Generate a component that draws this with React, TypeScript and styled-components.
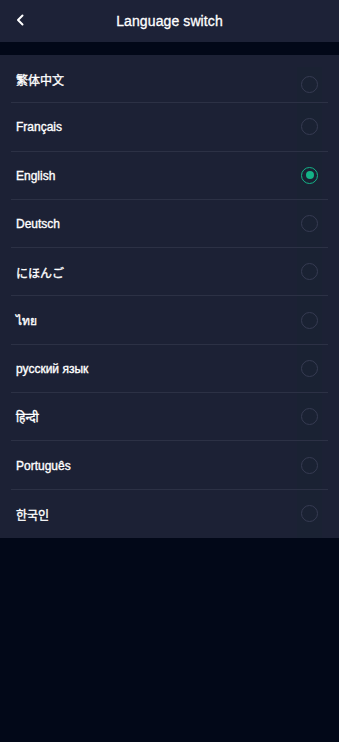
import React, { useState } from "react";
import styled, { createGlobalStyle } from "styled-components";

const GlobalStyle = createGlobalStyle`
  html, body {
    margin: 0;
    padding: 0;
    background: #020818;
    font-family: "Liberation Sans", Arial, "Noto Sans CJK SC", "Noto Sans CJK KR", "Noto Sans", sans-serif;
  }
`;

const LANGUAGES = [
  "繁体中文",
  "Français",
  "English",
  "Deutsch",
  "にほんご",
  "ไทย",
  "русский язык",
  "हिन्दी",
  "Português",
  "한국인",
];

const Page = styled.div`
  min-height: 742px;
  background: #020818;
`;

const Header = styled.header`
  height: 42px;
  display: flex;
  align-items: center;
  justify-content: center;
  position: relative;
  background: #1d2237;
`;

const BackButton = styled.button`
  position: absolute;
  left: 9px;
  top: 9px;
  width: 22px;
  height: 22px;
  padding: 0;
  border: none;
  background: transparent;
  display: flex;
  align-items: center;
  justify-content: center;
  cursor: pointer;
`;

const Title = styled.h1`
  margin: 0;
  color: #ffffff;
  font-size: 14px;
  font-weight: 400;
  letter-spacing: 0.1px;
  -webkit-text-stroke: 0.3px #ffffff;
`;

const Spacer = styled.div`
  height: 13px;
`;

const List = styled.ul`
  margin: 0;
  padding: 0 11px;
  list-style: none;
  background: #1c2135;
`;

const Row = styled.li<{ $last: boolean }>`
  box-sizing: border-box;
  height: 48.3px;
  display: flex;
  align-items: stretch;
  border-bottom: ${(p) => (p.$last ? "none" : "1px solid #2c3145")};
  cursor: pointer;
`;

const Label = styled.span`
  flex: 1;
  display: flex;
  align-items: center;
  padding-left: 5px;
  padding-top: 1px;
  color: #ffffff;
  font-size: 12px;
  font-weight: 400;
  -webkit-text-stroke: 0.35px #ffffff;
  font-family: "Liberation Sans", Arial, "Noto Sans CJK TC", "Noto Sans CJK JP", "Noto Sans CJK KR", "Noto Sans", sans-serif;
`;

const RadioCell = styled.span<{ $first: boolean }>`
  width: 25px;
  margin-right: 6px;
  margin-top: ${(p) => (p.$first ? "12px" : "0")};
  display: flex;
  align-items: center;
  justify-content: center;
  background: #1a2233;
`;

const Radio = styled.span<{ $checked: boolean }>`
  box-sizing: border-box;
  width: 17px;
  height: 17px;
  border-radius: 50%;
  border: ${(p) => (p.$checked ? "1.5px solid #14b387" : "1px solid #363b52")};
  display: flex;
  align-items: center;
  justify-content: center;

  &::after {
    content: "";
    width: 8px;
    height: 8px;
    border-radius: 50%;
    background: #14b387;
    display: ${(p) => (p.$checked ? "block" : "none")};
  }
`;

export default function App() {
  const [selected, setSelected] = useState("English");

  return (
    <Page>
      <GlobalStyle />
      <Header>
        <BackButton aria-label="Back">
          <svg width="10" height="12" viewBox="0 0 10 12" fill="none">
            <path
              d="M7.5 1.5L3 6l4.5 4.5"
              stroke="#ffffff"
              strokeWidth="2"
              strokeLinecap="round"
              strokeLinejoin="round"
            />
          </svg>
        </BackButton>
        <Title>Language switch</Title>
      </Header>
      <Spacer />
      <List>
        {LANGUAGES.map((lang, i) => (
          <Row
            key={lang}
            $last={i === LANGUAGES.length - 1}
            onClick={() => setSelected(lang)}
          >
            <Label>{lang}</Label>
            <RadioCell $first={i === 0}>
              <Radio $checked={selected === lang} />
            </RadioCell>
          </Row>
        ))}
      </List>
    </Page>
  );
}
